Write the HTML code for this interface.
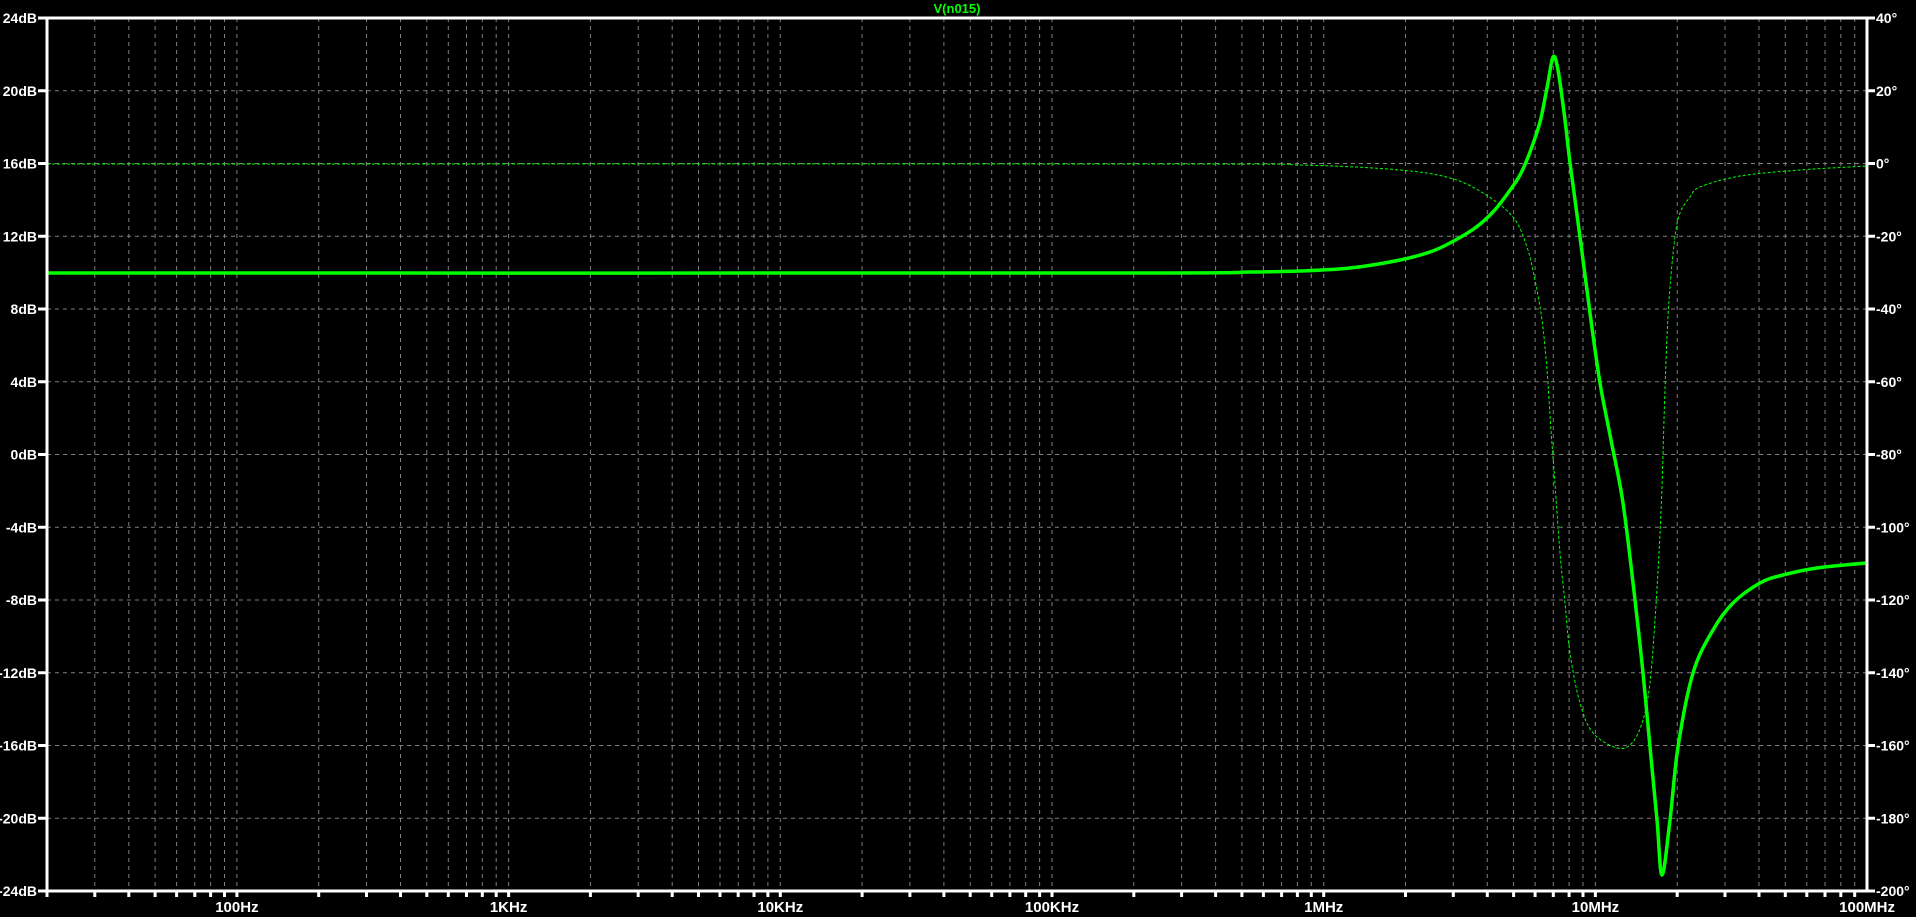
<!DOCTYPE html>
<html><head><meta charset="utf-8"><style>
html,body{margin:0;padding:0;background:#000;width:1916px;height:917px;overflow:hidden}
svg{display:block}
text{font-family:"Liberation Sans",sans-serif;font-weight:bold;font-size:14px;fill:#fff}
</style></head><body>
<svg id="s" width="1916" height="917" xmlns="http://www.w3.org/2000/svg">
<g id="grid" stroke="#808080" stroke-width="1" stroke-dasharray="4,4" fill="none"></g>
<g id="ticks" stroke="#fff" stroke-width="3"></g>
<text x="957" y="13" text-anchor="middle" style="fill:#00ff00;font-size:13px">V(n015)</text>
<g id="labels"></g>
<path id="ph" fill="none" stroke="#00ff00" stroke-width="1" stroke-dasharray="3,2"/>
<path id="mag" fill="none" stroke="#00ff00" stroke-width="3.5" stroke-linejoin="round"/>
<rect x="47" y="18" width="1820" height="873" fill="none" stroke="#fff" stroke-width="3"/>
</svg>
<script>
var L=47,R=1867,T=18,B=891,D=271.7;
var NS="http://www.w3.org/2000/svg";
function el(p,n,a,t){var e=document.createElementNS(NS,n);for(var k in a)e.setAttribute(k,a[k]);if(t)e.textContent=t;document.getElementById(p).appendChild(e);}
function xf(f){return L+D*(Math.log10(f)-Math.log10(20));}
var gd="",td="";
for(var k=1;k<=7;k++){for(var n=1;n<=9;n++){var f=n*Math.pow(10,k);if(f<20||f>1e8)continue;var x=xf(f);
 if(x>L+2&&x<R-2)gd+="M"+x.toFixed(1)+" "+T+"V"+B;
 td+="M"+x.toFixed(1)+" "+B+"v6";}}
for(var i=1;i<12;i++){var y=T+i*(B-T)/12;gd+="M"+L+" "+y.toFixed(1)+"H"+R;}
el("grid","path",{d:gd});
for(var i=0;i<=12;i++){var y=(T+i*(B-T)/12).toFixed(1);td+="M38 "+y+"h9M"+R+" "+y+"h8";
 el("labels","text",{x:37,y:(+y+5),"text-anchor":"end"},(24-4*i)+"dB");
 el("labels","text",{x:1876,y:(+y+5)},(40-20*i)+"°");}
el("ticks","path",{d:td});
var xl=[[100,"100Hz"],[1e3,"1KHz"],[1e4,"10KHz"],[1e5,"100KHz"],[1e6,"1MHz"],[1e7,"10MHz"],[1e8,"100MHz"]];
xl.forEach(function(a){el("labels","text",{x:xf(a[0]).toFixed(1),y:912,"text-anchor":"middle","style":"font-size:15px"},a[1]);});
function cr(p){var d="M"+p[0][0]+" "+p[0][1];for(var i=0;i<p.length-1;i++){var p0=p[i-1]||p[i],p1=p[i],p2=p[i+1],p3=p[i+2]||p2;
 d+="C"+(p1[0]+(p2[0]-p0[0])/6).toFixed(1)+" "+(p1[1]+(p2[1]-p0[1])/6).toFixed(1)+" "+(p2[0]-(p3[0]-p1[0])/6).toFixed(1)+" "+(p2[1]-(p3[1]-p1[1])/6).toFixed(1)+" "+p2[0]+" "+p2[1];}return d;}
var mag=[[47,273],[1100,273],[1250,272],[1300,271],[1350,268],[1400,260],[1430,252],[1450,243],[1475,228],[1493,212],[1508,193],[1520,175],[1530,152],[1540,122],[1547,88],[1553,57],[1558,70],[1565,120],[1570,163],[1580,237],[1590,313],[1600,383],[1611,440],[1623,503],[1635,600],[1643,673],[1650,747],[1657,820],[1662,875],[1670,820],[1678,747],[1693,673],[1713,630],[1733,603],[1760,583],[1783,575],[1817,568],[1867,563]];
var ph=[[47,164],[1150,164],[1300,165],[1400,170],[1450,178],[1483,193],[1513,217],[1527,247],[1535,280],[1542,320],[1547,370],[1551,430],[1554,470],[1560,553],[1565,603],[1570,653],[1580,703],[1593,733],[1617,748],[1632,743],[1643,720],[1650,683],[1655,620],[1659,553],[1662,487],[1664,420],[1667,337],[1670,287],[1675,237],[1680,213],[1690,197],[1700,187],[1740,176],[1800,170],[1867,166]];
document.getElementById("mag").setAttribute("d",cr(mag));
document.getElementById("ph").setAttribute("d",cr(ph));
</script>
</body></html>
